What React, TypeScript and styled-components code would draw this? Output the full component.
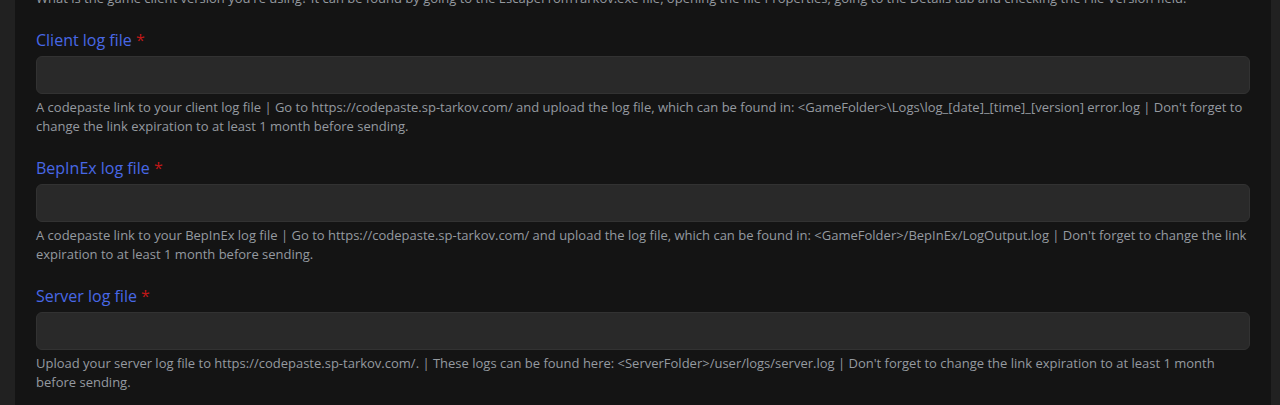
import React from "react";
import styled, { createGlobalStyle } from "styled-components";

const Global = createGlobalStyle`
  html, body { margin: 0; padding: 0; background: #141414; }
  body { font-family: "Open Sans", "Noto Sans", sans-serif; }
`;

const Page = styled.div`
  display: flex;
  width: 1280px;
  height: 405px;
  overflow: hidden;
  background: #141414;
`;

const SideStrip = styled.div<{ $w: number }>`
  flex: 0 0 ${(p) => p.$w}px;
  background: #212121;
`;

const Main = styled.div`
  flex: 1;
  padding: 0 21px 0 21px;
  display: flex;
  flex-direction: column;
`;

const TopText = styled.p`
  margin: -11px 0 0;
  font-size: 13px;
  line-height: 19px;
  color: #959aa0;
  white-space: nowrap;
`;

const Field = styled.div`
  display: flex;
  flex-direction: column;
  margin-top: 21px;
`;

const Label = styled.label`
  font-size: 16px;
  line-height: 22px;
  color: #4868e6;
  margin-bottom: 5px;
`;

const Star = styled.span`
  color: #c01818;
`;

const Input = styled.input`
  box-sizing: border-box;
  width: 100%;
  height: 38px;
  background: #292929;
  border: 1px solid #323232;
  border-radius: 6px;
  outline: none;
  color: #ddd;
`;

const Help = styled.p`
  margin: 4px 0 0;
  font-size: 13px;
  line-height: 19px;
  color: #959aa0;
`;

const fields = [
  {
    label: "Client log file",
    help: "A codepaste link to your client log file | Go to https://codepaste.sp-tarkov.com/ and upload the log file, which can be found in: <GameFolder>\\Logs\\log_[date]_[time]_[version] error.log | Don't forget to change the link expiration to at least 1 month before sending.",
  },
  {
    label: "BepInEx log file",
    help: "A codepaste link to your BepInEx log file | Go to https://codepaste.sp-tarkov.com/ and upload the log file, which can be found in: <GameFolder>/BepInEx/LogOutput.log | Don't forget to change the link expiration to at least 1 month before sending.",
  },
  {
    label: "Server log file",
    help: "Upload your server log file to https://codepaste.sp-tarkov.com/. | These logs can be found here: <ServerFolder>/user/logs/server.log | Don't forget to change the link expiration to at least 1 month before sending.",
  },
];

export default function App() {
  return (
    <Page>
      <Global />
      <SideStrip $w={15} />
      <Main>
        <TopText>
          What is the game client version you're using? It can be found by going to the EscapeFromTarkov.exe file, opening the file Properties, going to the Details tab and checking the File Version field.
        </TopText>
        {fields.map((f) => (
          <Field key={f.label}>
            <Label>
              {f.label} <Star>*</Star>
            </Label>
            <Input type="text" />
            <Help>{f.help}</Help>
          </Field>
        ))}
      </Main>
      <SideStrip $w={9} />
    </Page>
  );
}
